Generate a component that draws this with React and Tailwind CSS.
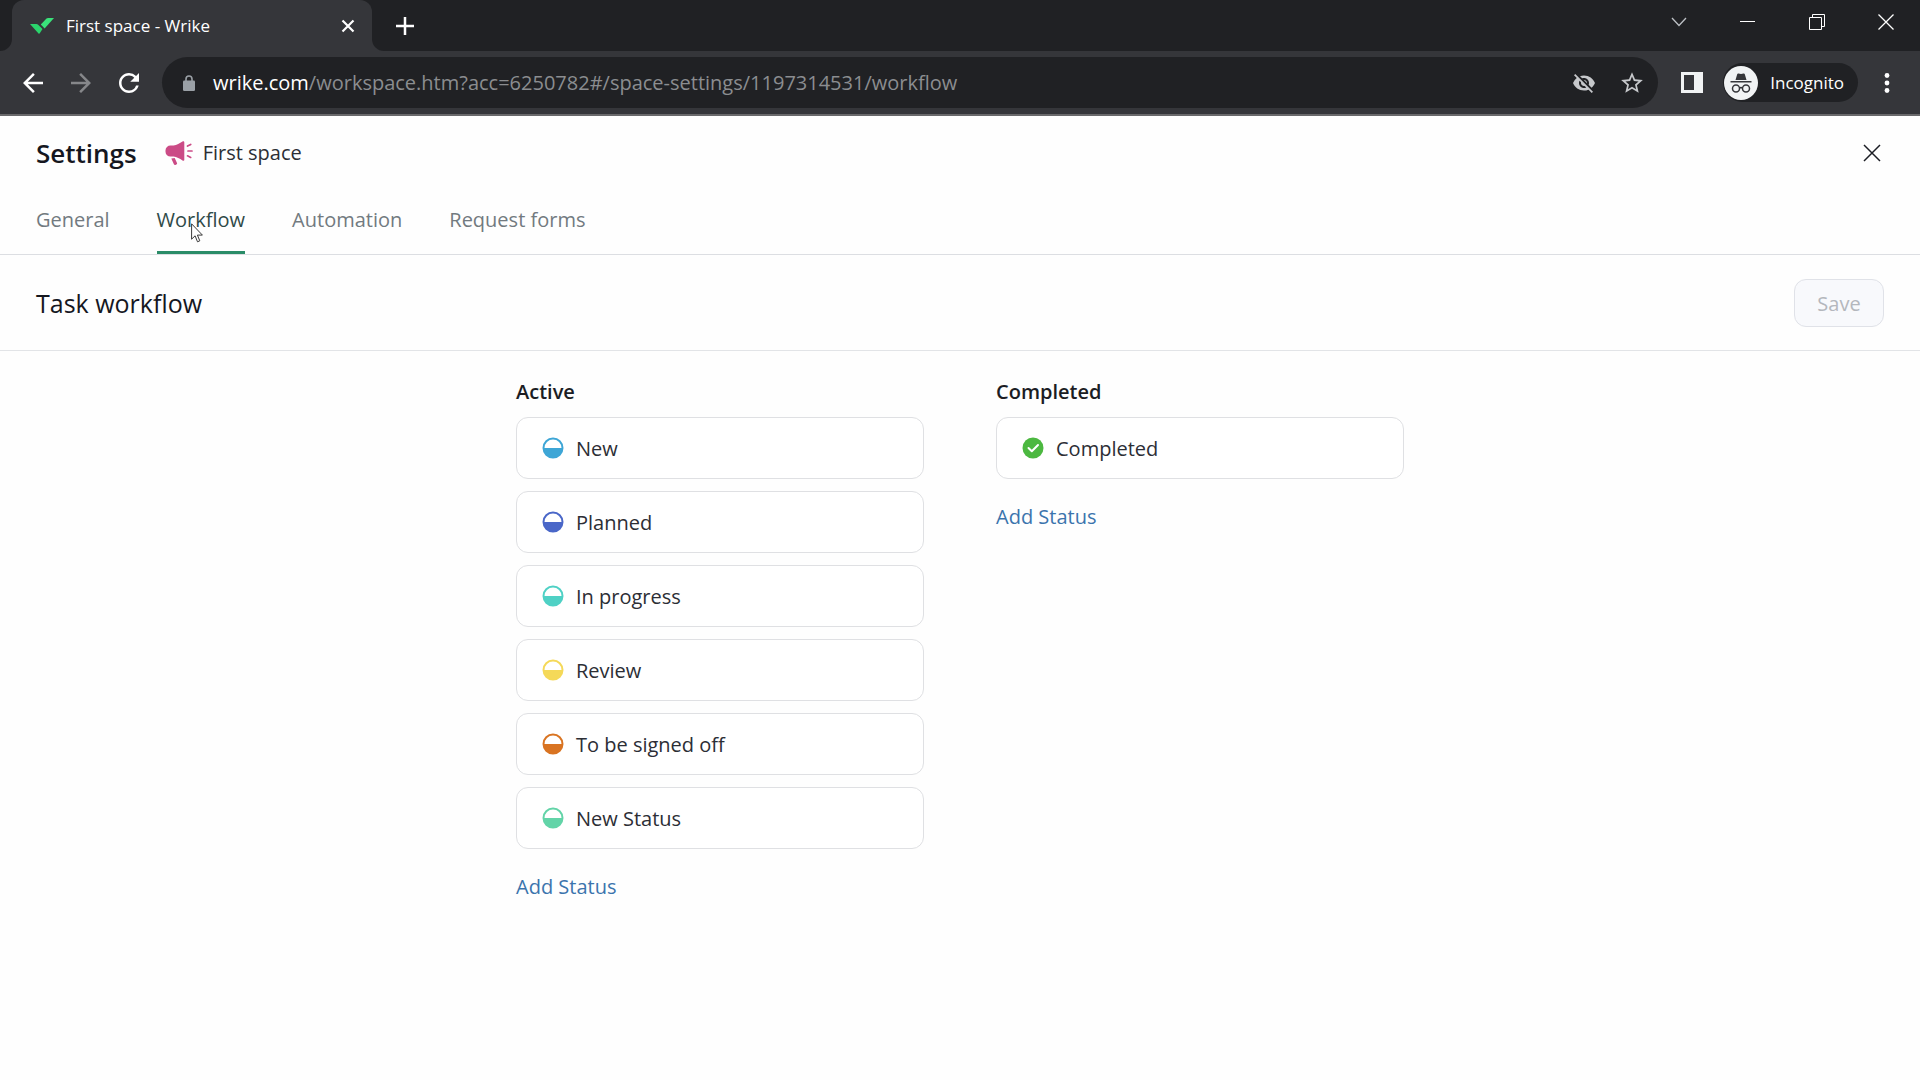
import React, { useState } from 'react';
import { MdArrowBack, MdArrowForward, MdRefresh, MdStarBorder, MdVisibilityOff } from 'react-icons/md';

const tabs = ['General', 'Workflow', 'Automation', 'Request forms'];

const activeStatuses = [
    { name: 'New', color: '#3ea6d6' },
    { name: 'Planned', color: '#4a67c8' },
    { name: 'In progress', color: '#4fd1c5' },
    { name: 'Review', color: '#f5d959' },
    { name: 'To be signed off', color: '#d97422' },
    { name: 'New Status', color: '#63d4a8' },
];

const completedStatuses = [{ name: 'Completed', color: '#4cb840', done: true }];

function WrikeLogo() {
    return (
        <svg className="w-6 h-4" viewBox="0 0 24 16">
            <path fill="#2bd46c" d="M0 6h6.5c.6 0 1 .2 1.400.600L12.500 11 9.800 15.300c-.4.600-.9.600-1.300.100z" />
            <path fill="#3ae27a" d="M16.500.600c.4-.4.900-.6 1.500-.6h6L14.600 10.400l-3.800-3.900z" />
        </svg>
    );
}

function LockIcon() {
    return (
        <svg className="w-3 h-4" viewBox="0 0 12 16">
            <rect x="0" y="5.500" width="12" height="10.500" rx="1.300" fill="#9aa0a6" />
            <path d="M3 6V4a3 3 0 0 1 6 0v2" fill="none" stroke="#9aa0a6" strokeWidth="1.600" />
        </svg>
    );
}

function IncognitoIcon() {
    return (
        <svg className="size-[34px]" viewBox="0 0 34 34">
            <circle cx="17" cy="17" r="17" fill="#f1f3f4" />
            <path fill="#35363a" d="M11.500 14l1.700-5.800c.2-.7.700-.9 1.300-.7l2.500.6 2.500-.6c.6-.2 1.100 0 1.300.7l1.700 5.800z" />
            <path fill="#35363a" d="M6.500 15h21v1.500h-21z" />
            <g fill="none" stroke="#35363a" strokeWidth="1.500">
                <circle cx="12" cy="22.500" r="3.500" />
                <circle cx="22" cy="22.500" r="3.500" />
                <path d="M15.500 22.200c.9-.8 2.100-.8 3 0" />
            </g>
        </svg>
    );
}

function MegaphoneIcon() {
    return (
        <svg className="w-7 h-6" viewBox="0 0 28 24" fill="#cb4b86">
            <path d="M17.500.500c.9-.6 1.800-.2 1.800.8v17.400c0 1-.9 1.400-1.800.8-2.800-1.900-5.700-3.400-9-3.900H5.500A5 5 0 0 1 .5 10.700V9.500a5 5 0 0 1 5-5h3c3.300-.5 6.200-2.100 9-4z" />
            <path d="M6.300 17.400l3.400-.5 2.300 5.200c.3.700 0 1.200-.6 1.500l-1 .3c-.7.200-1.200 0-1.500-.7z" />
            <path d="M22.500 5l3.200-1.600M23 10h4M22.500 14.800l3.200 1.600" fill="none" stroke="#cb4b86" strokeWidth="1.700" strokeLinecap="round" />
        </svg>
    );
}

function StatusIcon({ color, done }) {
    if (done) {
        return (
            <svg className="size-[22px]" viewBox="0 0 22 22">
                <circle cx="11" cy="11" r="10.500" fill={color} />
                <path d="M6.500 11l3.300 3.300L16 8" fill="none" stroke="#fff" strokeWidth="2" strokeLinecap="round" strokeLinejoin="round" />
            </svg>
        );
    }
    return (
        <svg className="size-[22px]" viewBox="0 0 22 22">
            <circle cx="11" cy="11" r="9.500" fill="#fff" stroke={color} strokeWidth="2" />
            <path d="M1.500 11h19a9.500 9.500 0 0 1-19 0z" fill={color} />
        </svg>
    );
}

function BrowserChrome() {
    return (
        <header className="bg-[#35363a] border-b-2 border-[#69696b] text-white">
            {/* Tab strip */}
            <div className="flex items-stretch h-[51px] bg-[#202124] pl-3">
                <div className="relative flex items-center w-[360px] bg-[#35363a] rounded-t-xl pl-[18px] pr-[17px]">
                    <span className="absolute -left-3 bottom-0 size-3 bg-[#35363a]">
                        <span className="block size-3 rounded-br-xl bg-[#202124]" />
                    </span>
                    <span className="absolute -right-3 bottom-0 size-3 bg-[#35363a]">
                        <span className="block size-3 rounded-bl-xl bg-[#202124]" />
                    </span>
                    <WrikeLogo />
                    <span className="ml-3 flex-1 text-[17px]">First space - Wrike</span>
                    <button aria-label="Close tab">
                        <svg className="size-[14px]" viewBox="0 0 14 14" stroke="#fff" strokeWidth="2.200">
                            <path d="M1.500 1.500l11 11M12.500 1.500l-11 11" />
                        </svg>
                    </button>
                </div>
                <button aria-label="New tab" className="ml-6">
                    <svg className="size-[18px]" viewBox="0 0 18 18" stroke="#fff" strokeWidth="2.500">
                        <path d="M9 0v18M0 9h18" />
                    </svg>
                </button>
                <div className="ml-auto flex h-[43px]">
                    <button aria-label="Search tabs" className="flex w-[69px] items-center justify-center">
                        <svg className="w-4 h-[10px]" viewBox="0 0 16 10" fill="none" stroke="#bdc1c6" strokeWidth="1.300">
                            <path d="M1 1l7 7.500L15 1" />
                        </svg>
                    </button>
                    <button aria-label="Minimize" className="flex w-[69px] items-center justify-center">
                        <span className="block w-[15px] h-px bg-white" />
                    </button>
                    <button aria-label="Restore" className="flex w-[69px] items-center justify-center">
                        <svg className="size-4" viewBox="0 0 16 16" fill="none" stroke="#fff">
                            <path d="M.5 3.500h12v12H.5zM3.500 3.500v-3h12v12h-3" />
                        </svg>
                    </button>
                    <button aria-label="Close window" className="flex w-[69px] items-center justify-center">
                        <svg className="size-4" viewBox="0 0 16 16" stroke="#fff" strokeWidth="1.300">
                            <path d="M.5.5l15 15M15.500.5l-15 15" />
                        </svg>
                    </button>
                </div>
            </div>

            {/* Toolbar */}
            <div className="flex items-center h-[63px] pl-[18px] pr-[30px]">
                <div className="flex gap-[18px]">
                    <button aria-label="Back"><MdArrowBack className="size-[30px]" /></button>
                    <button aria-label="Forward"><MdArrowForward className="size-[30px] text-[#86878a]" /></button>
                    <button aria-label="Reload"><MdRefresh className="size-[30px]" /></button>
                </div>
                <div className="ml-[18px] flex flex-1 items-center h-[51px] rounded-full bg-[#202124] pl-[21px] pr-[13px]">
                    <LockIcon />
                    <div className="ml-[18px] flex-1 text-[20px] text-[#8b8d90] whitespace-nowrap">
                        <span className="text-white">wrike.com</span>/workspace.htm?acc=6250782#/space-settings/1197314531/workflow
                    </div>
                    <button aria-label="Third-party cookies blocked" className="text-[#c6c8cb]"><MdVisibilityOff className="size-6" /></button>
                    <button aria-label="Bookmark this tab" className="ml-[23px] text-[#c6c8cb]"><MdStarBorder className="size-[26px]" /></button>
                </div>
                <button aria-label="Side panel" className="ml-[23px]">
                    <svg className="w-[22px] h-[21px]" viewBox="0 0 22 21">
                        <path fill="#f1f3f4" fillRule="evenodd" d="M0 0h22v21H0zM3 3v15h10V3z" />
                    </svg>
                </button>
                <button className="ml-5 flex items-center gap-3 h-[39px] rounded-full bg-[#202124] pl-[1px] pr-[14px] text-[17px]">
                    <IncognitoIcon />
                    Incognito
                </button>
                <button aria-label="Menu" className="ml-[26px]">
                    <svg className="w-[6px] h-5" viewBox="0 0 6 20" fill="#fff">
                        <circle cx="3" cy="2.500" r="2.400" />
                        <circle cx="3" cy="10" r="2.400" />
                        <circle cx="3" cy="17.500" r="2.400" />
                    </svg>
                </button>
            </div>
        </header>
    );
}

function StatusColumn({ title, statuses }) {
    return (
        <section>
            <h3 className="text-[20px] leading-[26px] font-semibold text-[#1b1d24] mb-3">{title}</h3>
            <ul className="flex flex-col gap-3">
                {statuses.map(status => (
                    <li key={status.name} className="flex items-center gap-3 h-[62px] rounded-xl border border-[#dfe0e3] bg-white pl-[25px] text-[20px] text-[#2c2e35]">
                        <StatusIcon color={status.color} done={status.done} />
                        <span className="pt-0.5">{status.name}</span>
                    </li>
                ))}
            </ul>
            <button className="mt-6 text-[20px] leading-[28px] text-[#3b74ad]">Add Status</button>
        </section>
    );
}

export default function App() {
    const [currentTab, setCurrentTab] = useState('Workflow');

    return (
        <div className="min-h-screen bg-[#fefefe] font-['Open_Sans',sans-serif]">
            <BrowserChrome />

            {/* Settings header */}
            <div className="border-b border-[#dcdee2] px-9">
                <div className="flex items-center h-[74px]">
                    <h1 className="text-[26px] font-semibold text-[#15171f]">Settings</h1>
                    <span className="ml-7 flex items-center gap-[10px] text-[20px] text-[#2c2e35]">
                        <MegaphoneIcon />
                        First space
                    </span>
                    <button aria-label="Close settings" className="ml-auto mr-[3px]">
                        <svg className="size-[18px]" viewBox="0 0 18 18" stroke="#1b1d24" strokeWidth="1.500">
                            <path d="M1 1l16 16M17 1L1 17" />
                        </svg>
                    </button>
                </div>
                <nav className="flex gap-[47px] h-16">
                    {tabs.map(tab => (
                        <button
                            key={tab}
                            onClick={() => setCurrentTab(tab)}
                            className={`relative flex items-center text-[20px] pb-0.5 border-b-3 ${tab === currentTab
                                ? 'border-[#2a8c68] text-[#2f4a48]'
                                : 'border-transparent text-[#727a80]'
                                }`}
                        >
                            {tab}
                            {tab === 'Workflow' && (
                                <svg className="absolute left-[34px] top-[33px] w-3 h-5" viewBox="0 0 12 20" fill="#fff" stroke="#3a3a3a" strokeLinejoin="round">
                                    <path d="M.6.800v15.400l3.500-3.400 2.400 6 2.300-1-2.400-5.700h5z" />
                                </svg>
                            )}
                        </button>
                    ))}
                </nav>
            </div>

            {/* Section title */}
            <div className="flex items-center justify-between h-24 border-b border-[#e2e4e7] px-9">
                <h2 className="pt-0.5 text-[25px] text-[#15171f]">Task workflow</h2>
                <button disabled className="h-12 w-[90px] rounded-xl border border-[#e0e2e8] bg-[#f8f9fc] pt-0.5 text-[20px] text-[#b4b7bd]">Save</button>
            </div>

            {/* Statuses */}
            <main className="mx-auto grid max-w-[888px] grid-cols-2 gap-[72px] pt-7">
                <StatusColumn title="Active" statuses={activeStatuses} />
                <StatusColumn title="Completed" statuses={completedStatuses} />
            </main>
        </div>
    );
}
